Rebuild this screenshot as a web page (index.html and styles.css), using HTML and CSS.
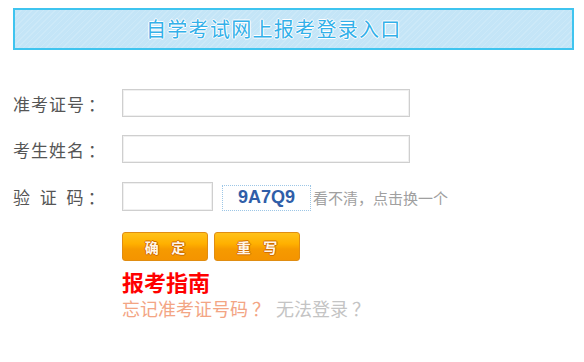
FILE: index.html
```html
<!DOCTYPE html>
<html lang="zh-CN">
<head>
<meta charset="utf-8">
<title>自学考试网上报考登录入口</title>
<link rel="stylesheet" href="styles.css">
</head>
<body>
<div class="page">
  <div class="banner"><span class="banner-title">自学考试网上报考登录入口</span></div>
  <form class="login">
    <div class="row">
      <label class="label">准考证号<span class="colon">：</span></label>
      <input class="field field-wide" type="text">
    </div>
    <div class="row">
      <label class="label">考生姓名<span class="colon">：</span></label>
      <input class="field field-wide" type="text">
    </div>
    <div class="row row-code">
      <label class="label label-spaced">验 证 码<span class="colon">：</span></label>
      <input class="field field-code" type="text">
      <span class="captcha">9A7Q9</span>
      <span class="refresh">看不清，点击换一个</span>
    </div>
    <div class="actions">
      <button class="btn" type="button">确&nbsp;&nbsp;&nbsp;&nbsp;定</button>
      <button class="btn" type="button">重&nbsp;&nbsp;&nbsp;&nbsp;写</button>
    </div>
    <div class="guide">报考指南</div>
    <div class="help">
      <span class="help-forgot">忘记准考证号码<span class="qmark">？</span></span>
      <span class="help-fail">无法登录<span class="qmark">？</span></span>
    </div>
  </form>
</div>
</body>
</html>
```
FILE: styles.css
```css
html, body {
  margin: 0;
  padding: 0;
  background: #ffffff;
}
body {
  font-family: "Noto Sans CJK SC", "Liberation Sans", sans-serif;
  color: #555555;
}
.page {
  padding: 8px 10px 0 13px;
}
.banner {
  box-sizing: border-box;
  height: 42px;
  border: 2px solid #3fc4ef;
  background-color: #c4e5f7;
  background-image: repeating-linear-gradient(135deg, rgba(255,255,255,0.14) 0 1px, rgba(255,255,255,0) 1px 4px);
  display: flex;
  align-items: center;
  padding-left: 131px;
}
.banner-title {
  font-size: 20px;
  letter-spacing: 1.3px;
  color: #33b0e9;
  line-height: 1;
  text-shadow: 0 0 1px #ffffff, 1px 0 0 #ffffff, -1px 0 0 #ffffff, 0 1px 0 #ffffff, 0 -1px 0 #ffffff;
}
.login {
  margin: 0;
  padding-top: 39px;
}
.row {
  display: flex;
  align-items: center;
  height: 28px;
  margin-bottom: 18px;
}
.row-code {
  height: 30px;
  margin-bottom: 21px;
}
.label {
  width: 109px;
  flex: none;
  font-size: 17px;
  color: #555555;
  letter-spacing: 1px;
}
.colon {
  margin-left: 3px;
}
.label-spaced {
  white-space: pre;
  letter-spacing: 3px;
}
.label-spaced .colon {
  margin-left: 1px;
}
.field {
  box-sizing: border-box;
  height: 28px;
  border: 1px solid #cfcfcf;
  background: #ffffff;
  margin: 0;
  padding: 0 4px;
  box-shadow: inset 0 0 0 1px #f0f0f0;
}
.field-wide {
  width: 288px;
}
.field-code {
  width: 91px;
  height: 29px;
}
.captcha {
  box-sizing: border-box;
  width: 89px;
  height: 26px;
  margin-left: 9px;
  margin-top: 3px;
  border: 1px dotted #9cc6e6;
  background: #ffffff;
  display: flex;
  align-items: center;
  justify-content: center;
  font-family: "Liberation Sans", Arial, sans-serif;
  font-weight: bold;
  font-size: 18px;
  color: #2f5ea8;
}
.refresh {
  margin-left: 2px;
  margin-top: 2px;
  font-size: 15px;
  color: #a0a0a0;
}
.actions {
  display: flex;
  gap: 6px;
  padding-left: 109px;
}
.btn {
  box-sizing: border-box;
  width: 86px;
  height: 29px;
  border: 1px solid #e08d12;
  border-radius: 3px;
  background: linear-gradient(#ffc21a 0%, #ffb000 40%, #f69a00 60%, #f49400 100%);
  font-family: "Noto Sans CJK SC", sans-serif;
  font-size: 14px;
  font-weight: bold;
  color: #fff6ea;
  text-shadow: 0 0 1px #d06a00, 1px 0 0 #d27000, -1px 0 0 #d27000, 0 1px 0 #d27000, 0 -1px 0 #d27000;
  padding: 0;
  cursor: pointer;
}
.guide {
  padding-left: 109px;
  margin-top: 5px;
  font-size: 22px;
  font-weight: bold;
  color: #ff0000;
  line-height: 30px;
}
.help {
  padding-left: 109px;
  font-size: 18px;
  line-height: 24px;
}
.qmark {
  margin-left: 4px;
}
.help-forgot {
  color: #f3a584;
}
.help-fail {
  color: #c4c4c4;
  margin-left: 2px;
}
```
